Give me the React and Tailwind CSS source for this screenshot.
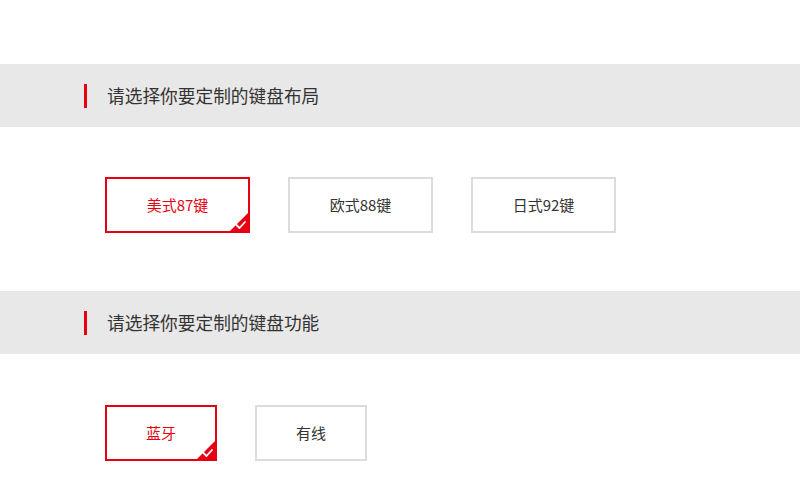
import { useState } from 'react';

const RED = '#e60012';

function SectionTitle({ title }) {
  return (
    <div className="flex h-[63px] items-center bg-[#e8e8e8] pl-[84px]">
      <span className="h-[24px] w-[3px] bg-[#e60012]" />
      <span className="ml-[20px] text-[17.7px] text-[#333]">{title}</span>
    </div>
  );
}

function Corner() {
  return (
    <svg className="absolute -bottom-[2px] -right-[2px]" width="22" height="22" viewBox="0 0 22 22">
      <polygon points="22,0 22,22 0,22" fill={RED} />
      <polyline points="8.5,14 11.5,17 17,11" fill="none" stroke="#fff" strokeWidth="1.8" strokeLinecap="round" strokeLinejoin="round" />
    </svg>
  );
}

function Option({ label, active, width, onClick }) {
  return (
    <button
      type="button"
      onClick={onClick}
      className={`relative flex h-[56px] items-center justify-center border-2 bg-white text-[15px] ${width} ${
        active ? 'border-[#e60012] text-[#e60012]' : 'border-[#dcdcdc] text-[#333]'
      }`}
    >
      {label}
      {active && <Corner />}
    </button>
  );
}

export default function App() {
  const [layout, setLayout] = useState('us87');
  const [conn, setConn] = useState('bt');

  const layouts = [
    { id: 'us87', label: '美式87键' },
    { id: 'eu88', label: '欧式88键' },
    { id: 'jp92', label: '日式92键' },
  ];
  const conns = [
    { id: 'bt', label: '蓝牙' },
    { id: 'wired', label: '有线' },
  ];

  return (
    <div
      className="min-h-[494px] w-full bg-white pt-[64px]"
      style={{ fontFamily: '"Noto Sans CJK SC", "Noto Sans", sans-serif' }}
    >
      <SectionTitle title="请选择你要定制的键盘布局" />
      <div className="flex gap-[38px] pb-[58px] pl-[105px] pt-[50px]">
        {layouts.map((o) => (
          <Option key={o.id} label={o.label} width="w-[145px]" active={layout === o.id} onClick={() => setLayout(o.id)} />
        ))}
      </div>

      <SectionTitle title="请选择你要定制的键盘功能" />
      <div className="flex gap-[38px] pl-[105px] pt-[51px]">
        {conns.map((o) => (
          <Option key={o.id} label={o.label} width="w-[112px]" active={conn === o.id} onClick={() => setConn(o.id)} />
        ))}
      </div>
    </div>
  );
}
